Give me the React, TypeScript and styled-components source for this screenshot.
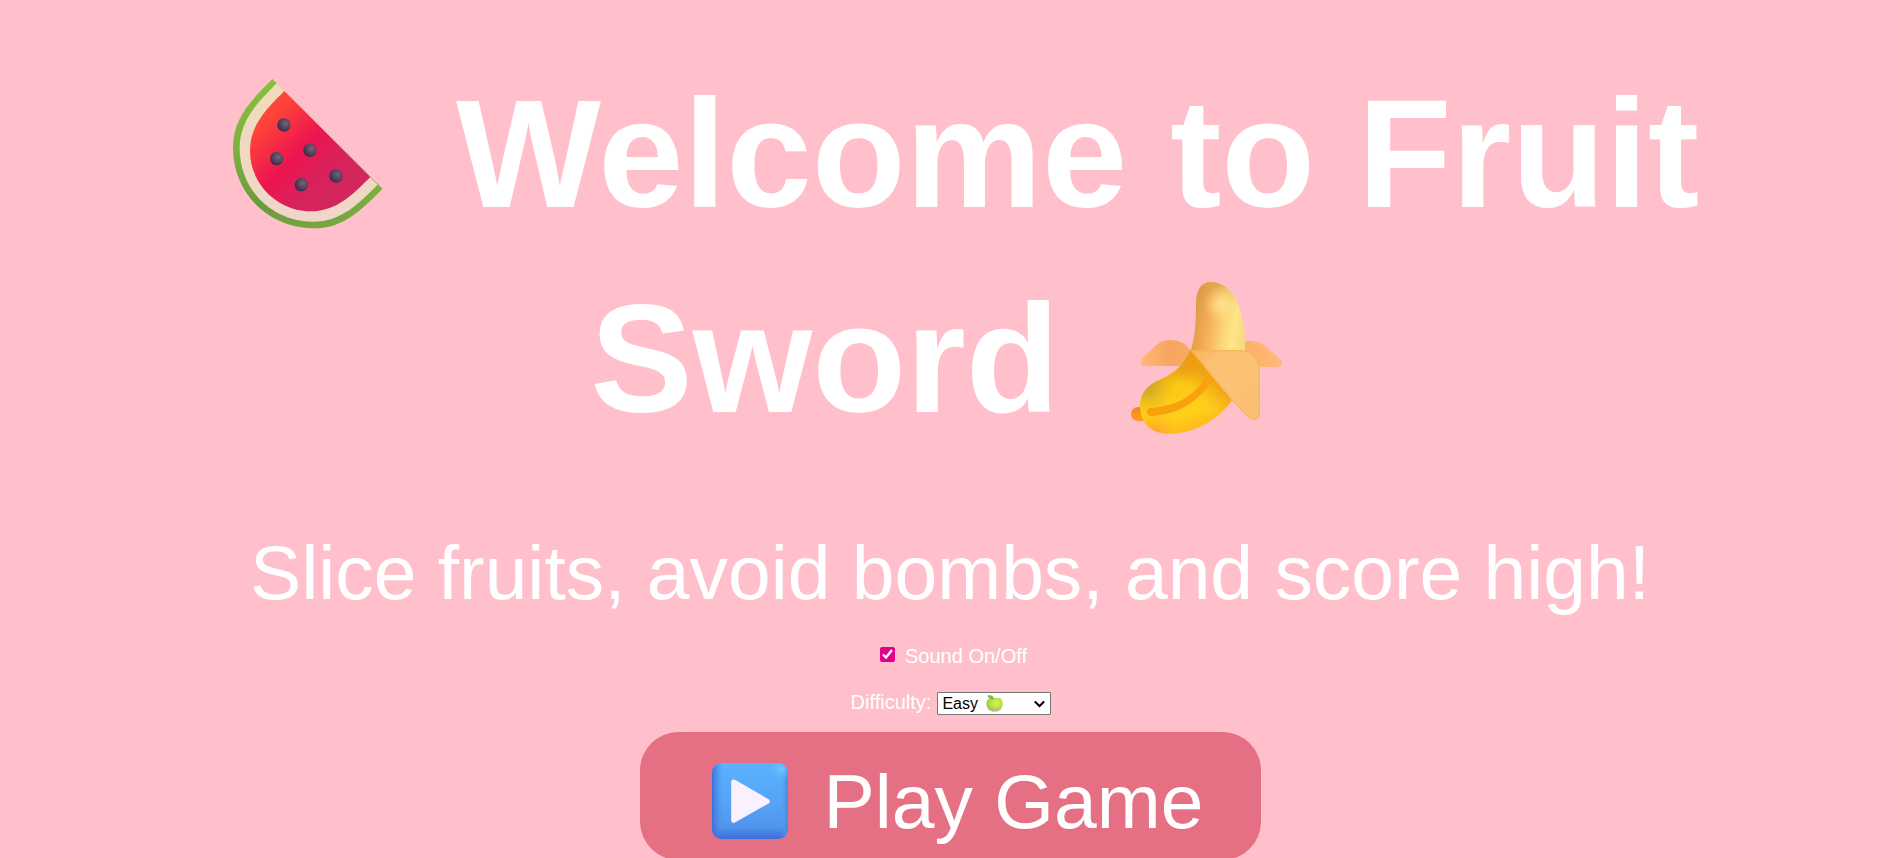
import React from "react";
import styled, { createGlobalStyle } from "styled-components";

const GlobalStyle = createGlobalStyle`
  * { box-sizing: border-box; }
  html, body { margin: 0; padding: 0; }
  body {
    background: pink;
    color: #fff;
    font-family: Arial, "Liberation Sans", sans-serif;
    font-size: 20px;
  }
  svg { display: block; flex: none; }
`;

const Page = styled.main`
  display: flex;
  flex-direction: column;
  align-items: center;
  height: 858px;
  overflow: hidden;
  padding: 51px 0 0 2px;
`;

const Title = styled.h1`
  margin: 0;
  font-size: 153.6px;
  font-weight: 700;
  line-height: 205px;
`;

const TitleLine = styled.span<{ $gap: number; $pad: string }>`
  display: flex;
  justify-content: center;
  align-items: center;
  white-space: nowrap;
  height: 205px;
  gap: ${(p) => p.$gap}px;
  padding: ${(p) => p.$pad};
`;

const TitleText = styled.span`
  padding-top: 2px;
`;

const Subtitle = styled.p`
  margin: 67px 0 0;
  font-size: 76.8px;
  line-height: 88px;
  white-space: nowrap;
`;

const Row = styled.label<{ $top: number; $gap: number; $indent: number }>`
  display: flex;
  align-items: center;
  flex: none;
  margin-top: ${(p) => p.$top}px;
  padding-left: ${(p) => p.$indent}px;
  gap: ${(p) => p.$gap}px;
  height: 24px;
  line-height: 24px;
`;

const Check = styled.input`
  margin: 0 0 3px;
  width: 15px;
  height: 15px;
  accent-color: #e3008c;
`;

const SelectBox = styled.span`
  display: flex;
  align-items: center;
  width: 114px;
  height: 23px;
  margin-top: 3px;
  padding: 0 5px 0 4px;
  border: 1px solid #767676;
  border-radius: 1px;
  background: #fff;
  color: #000;
  font-size: 16px;
  line-height: 21px;
  gap: 8px;

  svg:last-child { margin-left: auto; }
`;

const Play = styled.button`
  display: flex;
  align-items: center;
  flex: none;
  margin: 18px 0 0 1px;
  width: 621px;
  height: 128.4px;
  padding: 10px 0 0 72px;
  border: 0;
  border-radius: 38.4px;
  background: #e67083;
  color: #fff;
  font-family: inherit;
  font-size: 76.8px;
  line-height: 88px;
  gap: 35.5px;
`;

const SEEDS = [[192, 194], [270, 270], [170, 295], [244, 373], [348, 347]];

const Melon = () => (
  <svg width="150" height="150" viewBox="39 56 450 450">
    <defs>
      <linearGradient id="rind" x1="0.3" y1="0" x2="0.3" y2="1">
        <stop offset="0" stopColor="#86bf3c" />
        <stop offset="0.45" stopColor="#7fb23e" />
        <stop offset="0.85" stopColor="#6b9a3f" />
        <stop offset="1" stopColor="#75a63f" />
      </linearGradient>
      <linearGradient id="rindEnd" x1="260" y1="0" x2="480" y2="0" gradientUnits="userSpaceOnUse">
        <stop offset="0" stopColor="#7db13d" stopOpacity="0" />
        <stop offset="1" stopColor="#7db13d" />
      </linearGradient>
      <linearGradient id="pith" x1="0" y1="0" x2="0" y2="1">
        <stop offset="0" stopColor="#eedcba" />
        <stop offset="1" stopColor="#f0d6c9" />
      </linearGradient>
      <linearGradient id="flesh" x1="140" y1="150" x2="360" y2="370" gradientUnits="userSpaceOnUse">
        <stop offset="0.08" stopColor="#ff4439" />
        <stop offset="0.5" stopColor="#ed1450" />
        <stop offset="0.8" stopColor="#da215b" />
        <stop offset="1" stopColor="#d3265c" />
      </linearGradient>
      <radialGradient id="seed" cx="0.62" cy="0.38" r="0.62">
        <stop offset="0" stopColor="#75657a" />
        <stop offset="0.55" stopColor="#58485f" />
        <stop offset="1" stopColor="#3c2b4d" />
      </radialGradient>
    </defs>
    {["rind", "rindEnd"].map((fill) => (
      <path
        key={fill}
        d="M157 56 L487 385 C430 442 373 504 282 504 C145 504 39 398 39 263 C39 175 89 124 157 56Z"
        fill={`url(#${fill})`}
      />
    ))}
    <path d="M170 69 L473 373 C416 430 363 484 280 484 C155 484 59 388 59 263 C59 184 105 134 170 69Z" fill="url(#pith)" />
    <path d="M193 92 L451 350 C400 401 351 453 273 453 C172 453 90 371 90 271 C90 194 140 145 193 92Z" fill="url(#flesh)" />
    {SEEDS.map(([x, y]) => <circle key={x} cx={x} cy={y} r="20" fill="url(#seed)" />)}
  </svg>
);

const BananaSvg = styled.svg`
  margin-bottom: 3px;
`;

const Banana = () => (
  <BananaSvg width="153" height="153" viewBox="60 33 459 459">
    <defs>
      <linearGradient id="fruit" x1="248" y1="130" x2="405" y2="155" gradientUnits="userSpaceOnUse">
        <stop offset="0" stopColor="#d99a44" />
        <stop offset="0.3" stopColor="#f4ac55" />
        <stop offset="0.62" stopColor="#fbd577" />
        <stop offset="0.82" stopColor="#ffe68a" />
        <stop offset="1" stopColor="#f7da7d" />
      </linearGradient>
      <radialGradient id="fruitGlow" cx="335" cy="100" r="55" gradientUnits="userSpaceOnUse">
        <stop offset="0" stopColor="#ffe691" stopOpacity="0.9" />
        <stop offset="1" stopColor="#ffe28a" stopOpacity="0" />
      </radialGradient>
      <linearGradient id="fruitTop" x1="0" y1="36" x2="0" y2="110" gradientUnits="userSpaceOnUse">
        <stop offset="0" stopColor="#d99b4b" stopOpacity="0.6" />
        <stop offset="1" stopColor="#d99b4b" stopOpacity="0" />
      </linearGradient>
      <linearGradient id="skin" x1="190" y1="270" x2="270" y2="480" gradientUnits="userSpaceOnUse">
        <stop offset="0" stopColor="#e59c13" />
        <stop offset="0.35" stopColor="#fcc916" />
        <stop offset="0.72" stopColor="#ffd01a" />
        <stop offset="1" stopColor="#fcb81f" />
      </linearGradient>
      <radialGradient id="skinShade" cx="112" cy="350" r="80" gradientUnits="userSpaceOnUse">
        <stop offset="0" stopColor="#c2a82c" />
        <stop offset="1" stopColor="#e2b31e" stopOpacity="0" />
      </radialGradient>
      <radialGradient id="skinTop" cx="240" cy="255" r="85" gradientUnits="userSpaceOnUse">
        <stop offset="0" stopColor="#dc8e14" />
        <stop offset="1" stopColor="#eda216" stopOpacity="0" />
      </radialGradient>
      <linearGradient id="skinRight" x1="295" y1="410" x2="350" y2="350" gradientUnits="userSpaceOnUse">
        <stop offset="0" stopColor="#f3a015" stopOpacity="0" />
        <stop offset="1" stopColor="#f09c12" />
      </linearGradient>
      <radialGradient id="skinBottom" cx="135" cy="492" r="70" gradientUnits="userSpaceOnUse">
        <stop offset="0" stopColor="#ff9d2c" />
        <stop offset="1" stopColor="#ffb21f" stopOpacity="0" />
      </radialGradient>
      <linearGradient id="stem" x1="0" y1="0" x2="0" y2="1">
        <stop offset="0" stopColor="#df8d27" />
        <stop offset="0.5" stopColor="#ff911d" />
        <stop offset="1" stopColor="#ff9b1f" />
      </linearGradient>
      <linearGradient id="leftPeel" x1="95" y1="265" x2="235" y2="240" gradientUnits="userSpaceOnUse">
        <stop offset="0" stopColor="#ffb777" />
        <stop offset="0.6" stopColor="#f7a55e" />
        <stop offset="1" stopColor="#f9aa63" />
      </linearGradient>
      <linearGradient id="rightPeel" x1="410" y1="0" x2="515" y2="0" gradientUnits="userSpaceOnUse">
        <stop offset="0" stopColor="#fab066" />
        <stop offset="1" stopColor="#ffb97c" />
      </linearGradient>
      <linearGradient id="frontPeel" x1="250" y1="240" x2="440" y2="420" gradientUnits="userSpaceOnUse">
        <stop offset="0" stopColor="#f9b45c" />
        <stop offset="0.3" stopColor="#fcc274" />
        <stop offset="1" stopColor="#fbbf74" />
      </linearGradient>
      <clipPath id="peelClip">
        <path d="M241 240 H390 C424 240 450 266 450 301 V433 C450 448 434 455 420 446 Q400 430 364 390Z" />
      </clipPath>
    </defs>
    <path d="M93 278 Q92 268 103 259 C130 237 143 210 181 210 C211 210 229 223 241 241 C238 259 224 275 211 288 H104 Q94 288 93 278Z" fill="url(#leftPeel)" />
    <path d="M404 215 C430 210 451 214 468 230 L510 267 C521 278 515 291 502 291 H440 L400 250Z" fill="url(#rightPeel)" />
    <path d="M422 219 Q449 219 465 234 L501 268" fill="none" stroke="#ffc78c" strokeWidth="2.5" opacity="0.75" />
    {["fruit", "fruitTop", "fruitGlow"].map((fill) => (
      <path
        key={fill}
        d="M242 242 C254 207 258 171 258 103 C258 60 273 36 304 36 C352 36 379 83 391 121 C402 158 406 197 405 245Z"
        fill={`url(#${fill})`}
      />
    ))}
    <rect x="63" y="411" width="56" height="42" rx="21" fill="url(#stem)" />
    {["skin", "skinShade", "skinTop", "skinRight", "skinBottom"].map((fill) => (
      <path
        key={fill}
        d="M241 241 C223 285 193 309 153 328 C111 345 90 371 90 407 C90 460 124 491 178 491 C257 491 325 449 366 390Z"
        fill={`url(#${fill})`}
      />
    ))}
    <path d="M297 310 L311 326 C263 396 215 428 129 438 C108 441 103 415 123 414 C205 407 251 380 297 310Z" fill="#f8a20c" />
    <g clipPath="url(#peelClip)">
      <path d="M241 240 H460 V460 H420 L364 390Z" fill="url(#frontPeel)" />
      <path d="M241 240 H390 C424 240 450 266 450 301 V433 C450 448 434 455 420 446 Q400 430 364 390Z" fill="none" stroke="#f7b04c" strokeWidth="7" opacity="0.65" />
    </g>
  </BananaSvg>
);

const Apple = () => (
  <svg width="17" height="17" viewBox="0 0 17 17">
    <defs>
      <radialGradient id="apple" cx="0.6" cy="0.4" r="0.65">
        <stop offset="0" stopColor="#d0f25c" />
        <stop offset="0.6" stopColor="#b4e041" />
        <stop offset="1" stopColor="#8cc63a" />
      </radialGradient>
      <linearGradient id="appleBase" x1="0" y1="0.65" x2="0" y2="1">
        <stop offset="0" stopColor="#c9b49c" stopOpacity="0" />
        <stop offset="1" stopColor="#c9aba6" />
      </linearGradient>
    </defs>
    {["apple", "appleBase"].map((fill) => (
      <path
        key={fill}
        d="M8.4 3.4 C10 2.6 13 2.5 15 3.9 C17.3 5.8 17.4 10.4 15.3 13.3 C13.7 15.8 11.9 16.8 8.6 16.2 C5.5 16.8 3.5 16 1.9 13.6 C0 10.8 0 6.9 1.8 4.8 C3.6 3 7 2.8 8.4 3.4Z"
        fill={`url(#${fill})`}
      />
    ))}
    <path d="M1.4 0.3 C5 -0.3 7.6 0.6 8.3 4.2 C5 5 2.6 4 1.4 0.3Z" fill="#7fbd35" />
  </svg>
);

const Chevron = () => (
  <svg width="11" height="8" viewBox="0 0 11 8">
    <path d="M0.8 1.5 L5.5 6 L10.2 1.5" fill="none" stroke="#000" strokeWidth="2" />
  </svg>
);

const PlayIcon = () => (
  <svg width="76" height="76" viewBox="0 0 228 228">
    <defs>
      <linearGradient id="tile" x1="0" y1="0" x2="0" y2="1">
        <stop offset="0" stopColor="#5bb2ff" />
        <stop offset="0.5" stopColor="#57a4f7" />
        <stop offset="0.84" stopColor="#5096ec" />
        <stop offset="1" stopColor="#3e6cda" />
      </linearGradient>
      <linearGradient id="tileLeft" x1="0" y1="0" x2="1" y2="0">
        <stop offset="0" stopColor="#3c70d8" />
        <stop offset="0.14" stopColor="#4a8ae8" stopOpacity="0" />
      </linearGradient>
      <linearGradient id="tileRight" x1="1" y1="0" x2="0" y2="0">
        <stop offset="0" stopColor="#4a86e2" />
        <stop offset="0.1" stopColor="#55a0f5" stopOpacity="0" />
      </linearGradient>
      <radialGradient id="tileGlow" cx="208" cy="18" r="34" gradientUnits="userSpaceOnUse">
        <stop offset="0" stopColor="#6dc9ff" />
        <stop offset="1" stopColor="#62b9ff" stopOpacity="0" />
      </radialGradient>
    </defs>
    {["tile", "tileLeft", "tileRight", "tileGlow"].map((fill) => (
      <rect key={fill} width="228" height="228" rx="29" fill={`url(#${fill})`} />
    ))}
    <path d="M65 57 L166 115 L65 172Z" fill="#fbf0ff" stroke="#fbf0ff" strokeWidth="15" strokeLinejoin="round" />
  </svg>
);

export default function App() {
  return (
    <>
      <GlobalStyle />
      <Page>
        <Title>
          <TitleLine $gap={73} $pad="0 0 0 32px">
            <Melon />
            <TitleText>Welcome to Fruit</TitleText>
          </TitleLine>
          <TitleLine $gap={70} $pad="0 27px 0 0">
            <TitleText>Sword</TitleText>
            <Banana />
          </TitleLine>
        </Title>
        <Subtitle>Slice fruits, avoid bombs, and score high!</Subtitle>
        <Row $top={28} $gap={10} $indent={7}>
          <Check type="checkbox" defaultChecked />
          <span>Sound On/Off</span>
        </Row>
        <Row $top={22} $gap={6} $indent={2}>
          <span>Difficulty:</span>
          <SelectBox>
            <span>Easy</span>
            <Apple />
            <Chevron />
          </SelectBox>
        </Row>
        <Play>
          <PlayIcon />
          <span>Play Game</span>
        </Play>
      </Page>
    </>
  );
}
